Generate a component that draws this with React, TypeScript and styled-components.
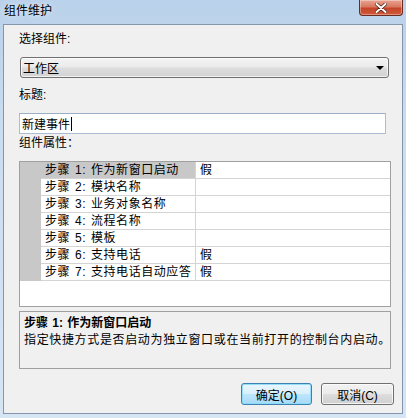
import React from 'react'
import styled, { createGlobalStyle } from 'styled-components'

const GlobalStyle = createGlobalStyle`
  html, body {
    margin: 0;
    padding: 0;
    background: #ffffff;
  }
  body {
    font-family: "Liberation Sans", "Noto Sans CJK SC", sans-serif;
    font-size: 12px;
    color: #000;
  }
`

const steps = [
  { name: '步骤 1: 作为新窗口启动', value: '假' },
  { name: '步骤 2: 模块名称', value: '' },
  { name: '步骤 3: 业务对象名称', value: '' },
  { name: '步骤 4: 流程名称', value: '' },
  { name: '步骤 5: 模板', value: '' },
  { name: '步骤 6: 支持电话', value: '假' },
  { name: '步骤 7: 支持电话自动应答', value: '假' },
]

const App: React.FC = () => {
  const selected = 0

  return (
    <>
      <GlobalStyle />
      <Window>
        <TitleBar>
          <Title>组件维护</Title>
          <CloseButton>
            <svg width="12" height="10" viewBox="0 0 12 10">
              <path d="M1.5 1 L10.5 9 M10.5 1 L1.5 9" stroke="#4a1a12" strokeWidth="3.4" strokeLinecap="round" />
              <path d="M1.5 1 L10.5 9 M10.5 1 L1.5 9" stroke="#ffffff" strokeWidth="2" strokeLinecap="round" />
            </svg>
          </CloseButton>
        </TitleBar>
        <Client>
          <Label $top={6}>选择组件:</Label>
          <Select>
            <span>工作区</span>
            <Arrow />
          </Select>
          <Label $top={9}>标题:</Label>
          <TextInput>
            新建事件
            <Caret />
          </TextInput>
          <Label $top={1}>组件属性：</Label>
          <Grid>
            {steps.map((step, index) => (
              <GridRow key={step.name}>
                <RowHeader />
                <NameCell $selected={index === selected}>{step.name}</NameCell>
                <ValueCell>{step.value}</ValueCell>
              </GridRow>
            ))}
          </Grid>
          <Description>
            <DescTitle>{steps[selected].name}</DescTitle>
            <DescText>指定快捷方式是否启动为独立窗口或在当前打开的控制台内启动。</DescText>
          </Description>
          <ButtonRow>
            <Button $primary>确定(O)</Button>
            <Button>取消(C)</Button>
          </ButtonRow>
        </Client>
      </Window>
    </>
  )
}

const Window = styled.div`
  width: 406px;
  height: 418px;
  box-sizing: border-box;
  display: flex;
  flex-direction: column;
  padding: 0 3px 4px 3px;
  background: linear-gradient(to bottom, #b9d1ea 0%, #cadcf0 30%, #d6e5f4 100%);
`

const TitleBar = styled.div`
  height: 24px;
  flex: none;
  display: flex;
  justify-content: space-between;
  align-items: flex-start;
`

const Title = styled.div`
  padding: 4px 0 0 1px;
  font-size: 12px;
  line-height: 14px;
  color: #000;
  text-shadow: 0 0 6px rgba(255, 255, 255, 0.9);
`

const CloseButton = styled.div`
  width: 44px;
  height: 16px;
  box-sizing: border-box;
  display: flex;
  align-items: center;
  justify-content: center;
  border: 1px solid #6b2a22;
  border-top: none;
  border-radius: 0 0 4px 4px;
  background: linear-gradient(to bottom, #e8a493 0%, #d9795f 45%, #c5452a 55%, #d05a38 100%);
  box-shadow: inset 0 0 0 1px rgba(255, 255, 255, 0.35);
`

const Client = styled.div`
  flex: 1;
  display: flex;
  flex-direction: column;
  background: #f0f0f0;
  border: 1px solid #8496ab;
  padding-left: 15px;
`

const Label = styled.div<{ $top: number }>`
  margin-top: ${(p) => p.$top}px;
  height: 16px;
  line-height: 16px;
  font-size: 12px;
`

const Select = styled.div`
  margin: 10px 0 0 1px;
  width: 369px;
  height: 21px;
  box-sizing: border-box;
  display: flex;
  align-items: center;
  justify-content: space-between;
  padding: 0 4px 0 2px;
  border: 1px solid #707070;
  border-radius: 3px;
  background: linear-gradient(to bottom, #f3f3f3 0%, #ebebeb 48%, #dddddd 52%, #d2d2d2 100%);
  box-shadow: inset 0 0 0 1px rgba(255, 255, 255, 0.7);
`

const Arrow = styled.div`
  width: 0;
  height: 0;
  border-left: 4px solid transparent;
  border-right: 4px solid transparent;
  border-top: 4px solid #000;
  margin-top: 1px;
`

const TextInput = styled.div`
  margin-top: 10px;
  width: 367px;
  height: 21px;
  box-sizing: border-box;
  display: flex;
  align-items: center;
  padding-left: 2px;
  background: #fff;
  border: 1px solid #abbdd2;
  border-top-color: #9aaec6;
`

const Caret = styled.span`
  display: inline-block;
  width: 1px;
  height: 14px;
  background: #000;
  margin-left: 1px;
`

const Grid = styled.div`
  margin-top: 10px;
  width: 372px;
  height: 146px;
  box-sizing: border-box;
  background: #fff;
  border: 1px solid #a0a0a0;
  display: flex;
  flex-direction: column;
`

const GridRow = styled.div`
  display: flex;
  height: 17px;
  flex: none;
`

const RowHeader = styled.div`
  width: 21px;
  flex: none;
  background: #c8c8c8;
`

const NameCell = styled.div<{ $selected: boolean }>`
  width: 155px;
  flex: none;
  box-sizing: border-box;
  padding-left: 4px;
  line-height: 16px;
  letter-spacing: 0.55px;
  word-spacing: 1px;
  border-bottom: 1px solid #d4d4d4;
  border-right: 1px solid #d4d4d4;
  background: ${(p) => (p.$selected ? '#c8c8c8' : '#ffffff')};
  white-space: nowrap;
  overflow: hidden;
`

const ValueCell = styled.div`
  flex: 1;
  box-sizing: border-box;
  padding-left: 4px;
  line-height: 16px;
  border-bottom: 1px solid #d4d4d4;
`

const Description = styled.div`
  margin-top: 4px;
  width: 372px;
  height: 58px;
  box-sizing: border-box;
  border: 1px solid #a0a0a0;
  background: #f0f0f0;
  padding: 3px 0 0 4px;
`

const DescTitle = styled.div`
  font-weight: bold;
  line-height: 16px;
  word-spacing: 1px;
`

const DescText = styled.div`
  line-height: 16px;
  margin-top: 1px;
  letter-spacing: 0.65px;
  white-space: nowrap;
`

const ButtonRow = styled.div`
  margin-top: 14px;
  display: flex;
  justify-content: flex-end;
  gap: 9px;
  padding-right: 8px;
`

const Button = styled.div<{ $primary?: boolean }>`
  width: ${(p) => (p.$primary ? 71 : 73)}px;
  height: 22px;
  box-sizing: border-box;
  display: flex;
  align-items: center;
  justify-content: center;
  font-size: 12px;
  border: 1px solid ${(p) => (p.$primary ? '#3c7fb1' : '#707070')};
  border-radius: 3px;
  background: ${(p) =>
    p.$primary
      ? 'linear-gradient(to bottom, #eaf6fd 0%, #d9f0fc 48%, #bee6fd 52%, #a7d9f5 100%)'
      : 'linear-gradient(to bottom, #f2f2f2 0%, #ebebeb 48%, #dddddd 52%, #cfcfcf 100%)'};
  box-shadow: inset 0 0 0 1px ${(p) => (p.$primary ? 'rgba(140, 220, 250, 0.9)' : 'rgba(255, 255, 255, 0.75)')};
`

export default App
